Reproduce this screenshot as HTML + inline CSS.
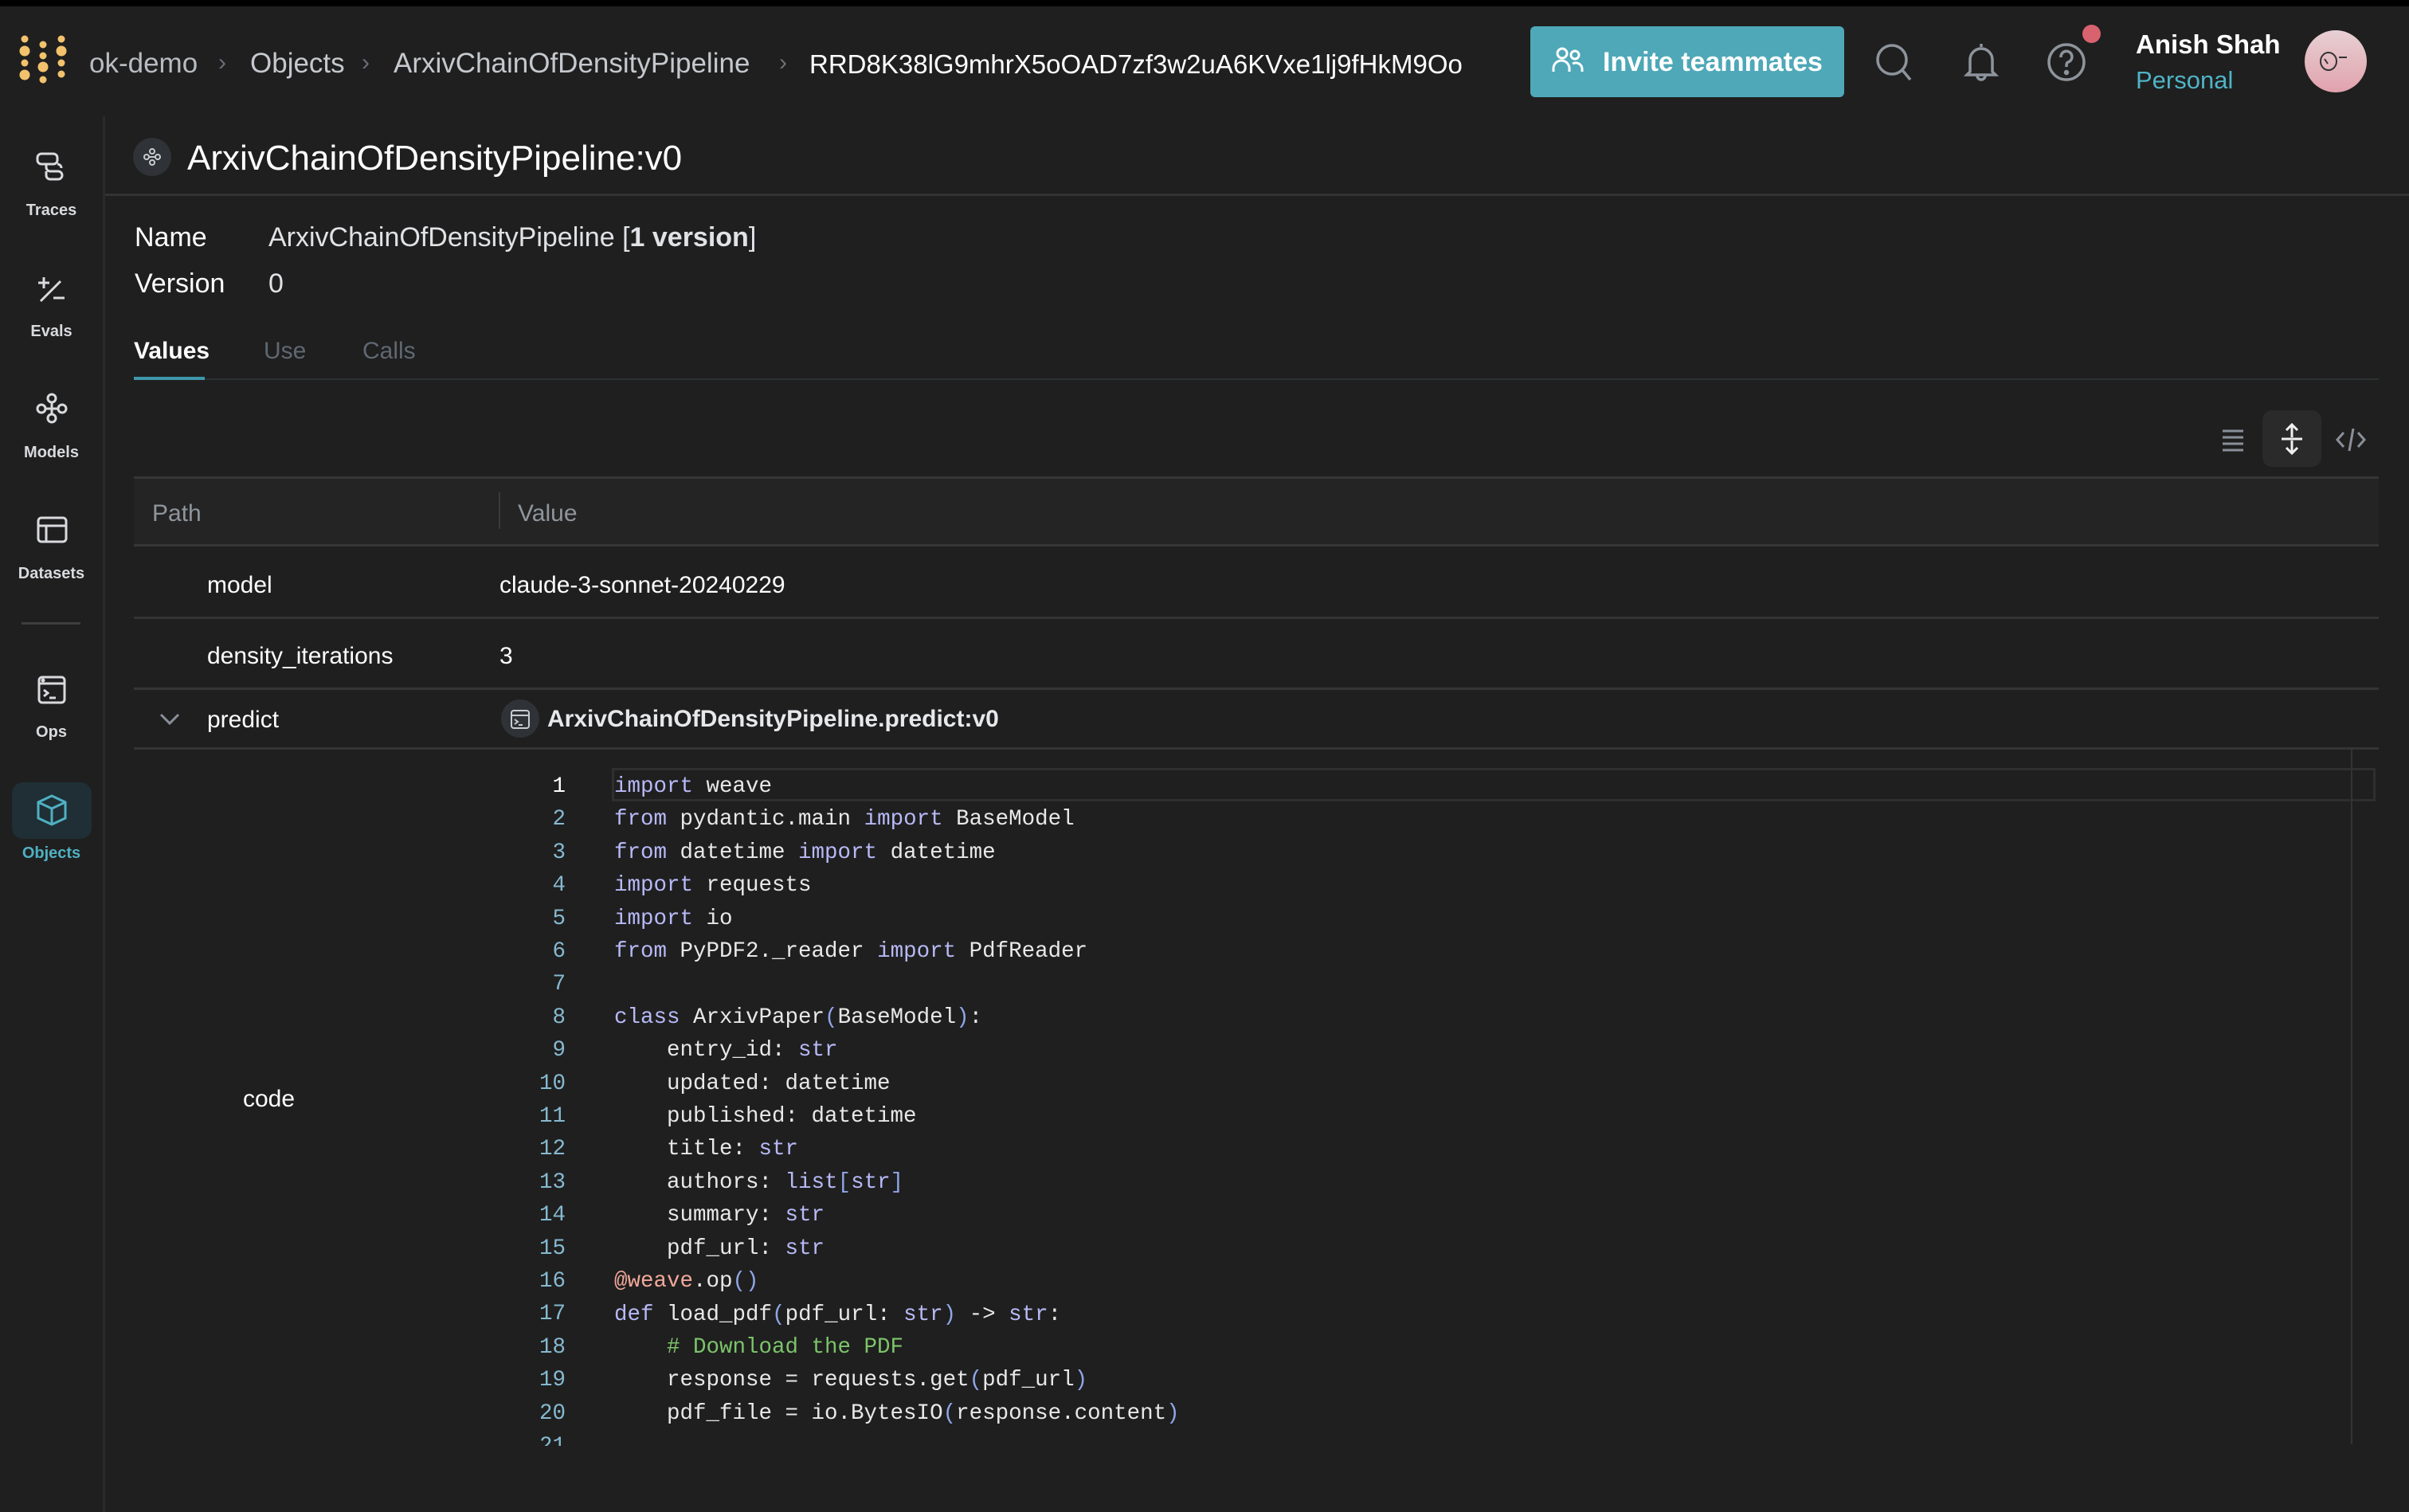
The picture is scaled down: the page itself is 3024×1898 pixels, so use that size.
<!DOCTYPE html>
<html><head><meta charset="utf-8"><style>
*{margin:0;padding:0;box-sizing:border-box}
body{width:3024px;height:1898px;background:#1f1f1f;font-family:"Liberation Sans",sans-serif;color:#e4e6eb;position:relative;overflow:hidden}
.a{position:absolute;white-space:nowrap}
.bc{font-size:35px;color:#c5c8cd;top:60px}
.chev{color:#6b7078;font-size:30px;top:62px}
.sl{font-size:20px;font-weight:bold;color:#d8dadd;width:129px;text-align:center;left:0}
.ico{position:absolute}
.row{position:absolute;left:168px;width:2818px;border-bottom:3px solid #343434}
.code{font-family:"Liberation Mono",monospace;font-size:27.5px;line-height:41.4px;color:#e8e8e8}
.ln{position:absolute;left:600px;width:110px;text-align:right;color:#86b9d0}
.k{color:#b7b9f7}.p{color:#8fa6e8}.c{color:#7cc46a}.d{color:#f0a89a}
</style></head><body>
<div class="a" style="left:0;top:0;width:3024px;height:8px;background:#000"></div>

<svg class="ico" style="left:0;top:0" width="110" height="120"><g fill="#f2c26c">
<circle cx="31" cy="49" r="4.5"/><circle cx="31" cy="64" r="6.5"/><circle cx="31" cy="79" r="4.5"/><circle cx="31" cy="94" r="6.5"/>
<circle cx="54" cy="56" r="4.5"/><circle cx="54" cy="70" r="4.5"/><circle cx="54" cy="84" r="6.5"/><circle cx="54" cy="100" r="4.5"/>
<circle cx="77" cy="49" r="4.5"/><circle cx="77" cy="64" r="6.5"/><circle cx="77" cy="79" r="4.5"/><circle cx="77" cy="93" r="4.5"/></g></svg>

<div class="a bc" style="left:112px;color:#b8bbc0">ok-demo</div>
<div class="a chev" style="left:274px">›</div>
<div class="a bc" style="left:314px">Objects</div>
<div class="a chev" style="left:454px">›</div>
<div class="a bc" style="left:494px">ArxivChainOfDensityPipeline</div>
<div class="a chev" style="left:978px">›</div>
<div class="a bc" style="left:1016px;color:#fff;font-size:33px;top:62px">RRD8K38lG9mhrX5oOAD7zf3w2uA6KVxe1lj9fHkM9Oo</div>

<div class="a" style="left:1921px;top:33px;width:394px;height:89px;background:#4ea8b8;border-radius:6px"></div>
<svg class="ico" style="left:1948px;top:58px" width="42" height="36" fill="none" stroke="#fff" stroke-width="3"><circle cx="13" cy="9" r="6"/><path d="M2 32v-4a10 10 0 0 1 20 0v4"/><circle cx="29" cy="11" r="5"/><path d="M26 22a8 8 0 0 1 12 6v4"/></svg>
<div class="a" style="left:2012px;top:59px;font-size:34px;color:#fff;font-weight:bold">Invite teammates</div>

<svg class="ico" style="left:2352px;top:52px" width="52" height="52" fill="none" stroke="#8e949c" stroke-width="3.5"><circle cx="23" cy="23" r="18"/><path d="M36 36l10 12"/></svg>
<svg class="ico" style="left:2464px;top:52px" width="46" height="52" fill="none" stroke="#8e949c" stroke-width="3.5"><path d="M23 3v4M9 38V23a14 14 0 0 1 28 0v15l4 4H5z"/><path d="M18 43a5 5 0 0 0 10 0"/></svg>
<svg class="ico" style="left:2568px;top:52px" width="52" height="52" fill="none" stroke="#8e949c" stroke-width="3.5"><circle cx="26" cy="26" r="22"/><path d="M19 20a7 7 0 1 1 9 6c-2 1-2 3-2 6"/><circle cx="26" cy="39" r="1.5" fill="#8e949c"/></svg>
<div class="a" style="left:2614px;top:31px;width:23px;height:23px;border-radius:50%;background:#d9626f"></div>
<div class="a" style="left:2681px;top:37px;font-size:33px;color:#fff;font-weight:bold">Anish Shah</div>
<div class="a" style="left:2681px;top:83px;font-size:31px;color:#4fb4c6">Personal</div>
<div class="a" style="left:2893px;top:38px;width:78px;height:78px;border-radius:50%;background:linear-gradient(#e7d0d3,#e1a2ad)"></div>
<svg class="ico" style="left:2908px;top:62px" width="44" height="30" fill="none" stroke="#333" stroke-width="2"><ellipse cx="15" cy="15" rx="10" ry="11"/><path d="M10 12l4 6M28 10h10"/></svg>

<div class="a" style="left:129px;top:146px;width:3px;height:1752px;background:#2b2b2b"></div>
<svg class="ico" style="left:44px;top:190px" width="42" height="40" fill="none" stroke="#d8dadd" stroke-width="3"><rect x="3" y="3" width="25" height="13" rx="5"/><path d="M14 16v4a5 5 0 0 0 5 5h10a5 5 0 0 1 0 10H19a5 5 0 0 1-5-5v-5M28 16a5 5 0 0 1 5 5"/></svg>
<div class="a sl" style="top:253px">Traces</div>
<svg class="ico" style="left:46px;top:345px" width="40" height="36" fill="none" stroke="#d8dadd" stroke-width="3"><path d="M2 10h14M9 3v14M5 33L30 8M21 29h14"/></svg>
<div class="a sl" style="top:405px">Evals</div>
<svg class="ico" style="left:44px;top:492px" width="42" height="42" fill="none" stroke="#d8dadd" stroke-width="3"><circle cx="21" cy="8" r="5"/><circle cx="21" cy="33" r="5"/><circle cx="8" cy="21" r="5"/><circle cx="34" cy="21" r="5"/><path d="M13 21h16M21 13v15"/></svg>
<div class="a sl" style="top:557px">Models</div>
<svg class="ico" style="left:46px;top:647px" width="40" height="36" fill="none" stroke="#d8dadd" stroke-width="3"><rect x="2" y="3" width="35" height="30" rx="4"/><path d="M2 13h35M12 13v20"/></svg>
<div class="a sl" style="top:709px">Datasets</div>
<div class="a" style="left:27px;top:781px;width:74px;height:3px;background:#3e3e3e"></div>
<svg class="ico" style="left:47px;top:848px" width="36" height="36" fill="none" stroke="#d8dadd" stroke-width="3"><rect x="2" y="2" width="32" height="32" rx="4"/><path d="M2 10h32M8 18l5 4-5 4M15 28h8"/><circle cx="7" cy="6" r="1" fill="#d8dadd"/></svg>
<div class="a sl" style="top:908px">Ops</div>
<div class="a" style="left:15px;top:982px;width:100px;height:71px;border-radius:14px;background:#1f2f35"></div>
<svg class="ico" style="left:45px;top:997px" width="40" height="40" fill="none" stroke="#4fb0c2" stroke-width="3"><path d="M20 2L37 10v20L20 38 3 30V10z"/><path d="M3 10l17 8 17-8M20 18v20"/></svg>
<div class="a sl" style="top:1060px;color:#4fb0c2">Objects</div>

<div class="a" style="left:167px;top:173px;width:48px;height:48px;border-radius:50%;background:#2f3236"></div>
<svg class="ico" style="left:179px;top:185px" width="24" height="24" fill="none" stroke="#c8cbd0" stroke-width="2"><circle cx="12" cy="5" r="3"/><circle cx="12" cy="19" r="3"/><circle cx="5" cy="12" r="3"/><circle cx="19" cy="12" r="3"/><path d="M8 12h8"/></svg>
<div class="a" style="left:235px;top:174px;font-size:44px;color:#fff">ArxivChainOfDensityPipeline:v0</div>
<div class="a" style="left:132px;top:243px;width:2892px;height:3px;background:#333"></div>

<div class="a" style="left:169px;top:279px;font-size:34px;color:#fff">Name</div>
<div class="a" style="left:337px;top:279px;font-size:34px;color:#e0e2e5">ArxivChainOfDensityPipeline [<b>1 version</b>]</div>
<div class="a" style="left:169px;top:337px;font-size:34px;color:#fff">Version</div>
<div class="a" style="left:337px;top:337px;font-size:34px;color:#e0e2e5">0</div>

<div class="a" style="left:168px;top:424px;font-size:30px;color:#fff;font-weight:bold">Values</div>
<div class="a" style="left:331px;top:424px;font-size:30px;color:#5f6872">Use</div>
<div class="a" style="left:455px;top:424px;font-size:30px;color:#5f6872">Calls</div>
<div class="a" style="left:168px;top:475px;width:2818px;height:2px;background:#2c3134"></div>
<div class="a" style="left:168px;top:473px;width:89px;height:4px;background:#3e98ab"></div>

<svg class="ico" style="left:2788px;top:537px" width="30" height="30" stroke="#8a9099" stroke-width="3"><path d="M2 4h26M2 12h26M2 20h26M2 28h26"/></svg>
<div class="a" style="left:2840px;top:515px;width:74px;height:71px;border-radius:12px;background:#2a2a2a"></div>
<svg class="ico" style="left:2862px;top:530px" width="30" height="42" fill="none" stroke="#f0f0f0" stroke-width="3"><path d="M15 3v16M8 10l7-7 7 7M2 21h26M15 23v16M8 32l7 7 7-7"/></svg>
<svg class="ico" style="left:2932px;top:536px" width="38" height="32" fill="none" stroke="#8a9099" stroke-width="3"><path d="M10 7L2 16l8 9M28 7l8 9-8 9M22 2l-5 28"/></svg>

<div class="a" style="left:168px;top:598px;width:2818px;height:88px;background:#242424;border-top:3px solid #363636;border-bottom:3px solid #363636"></div>
<div class="a" style="left:191px;top:628px;font-size:30px;color:#8f959d">Path</div>
<div class="a" style="left:626px;top:618px;width:2px;height:46px;background:#3a3a3a"></div>
<div class="a" style="left:650px;top:628px;font-size:30px;color:#8f959d">Value</div>

<div class="row" style="top:686px;height:91px"></div>
<div class="a" style="left:260px;top:718px;font-size:30px;color:#fff">model</div>
<div class="a" style="left:627px;top:718px;font-size:30px;color:#fff">claude-3-sonnet-20240229</div>
<div class="row" style="top:777px;height:89px"></div>
<div class="a" style="left:260px;top:807px;font-size:30px;color:#fff">density_iterations</div>
<div class="a" style="left:627px;top:807px;font-size:30px;color:#fff">3</div>
<div class="row" style="top:866px;height:75px"></div>
<svg class="ico" style="left:200px;top:895px" width="26" height="16" fill="none" stroke="#8a9099" stroke-width="3"><path d="M2 2l11 11 11-11"/></svg>
<div class="a" style="left:260px;top:887px;font-size:30px;color:#fff">predict</div>
<div class="a" style="left:629px;top:878px;width:48px;height:48px;border-radius:50%;background:#2f3236"></div>
<svg class="ico" style="left:640px;top:890px" width="26" height="26" fill="none" stroke="#c8cbd0" stroke-width="2"><rect x="2" y="2" width="22" height="22" rx="3"/><path d="M2 8h22M6 13l4 3-4 3M11 20h5"/></svg>
<div class="a" style="left:687px;top:886px;font-size:30px;color:#e6e8eb;font-weight:bold">ArxivChainOfDensityPipeline.predict:v0</div>

<div class="a" style="left:305px;top:1363px;font-size:30px;color:#fff">code</div>
<div class="a" style="left:768px;top:964px;width:2214px;height:42px;border:3px solid #2f2f2f"></div>
<div class="a" style="left:2951px;top:941px;width:2px;height:872px;background:#333"></div>

<div class="a" style="left:0;top:967px;width:2940px;height:848px;overflow:hidden">
<div class="code" style="position:absolute;left:0;top:0">
<div class="ln" style="top:0;color:#fff">1</div><div class="ln" style="top:41.4px">2</div><div class="ln" style="top:82.8px">3</div><div class="ln" style="top:124.2px">4</div><div class="ln" style="top:165.6px">5</div><div class="ln" style="top:207px">6</div><div class="ln" style="top:248.4px">7</div><div class="ln" style="top:289.8px">8</div><div class="ln" style="top:331.2px">9</div><div class="ln" style="top:372.6px">10</div><div class="ln" style="top:414px">11</div><div class="ln" style="top:455.4px">12</div><div class="ln" style="top:496.8px">13</div><div class="ln" style="top:538.2px">14</div><div class="ln" style="top:579.6px">15</div><div class="ln" style="top:621px">16</div><div class="ln" style="top:662.4px">17</div><div class="ln" style="top:703.8px">18</div><div class="ln" style="top:745.2px">19</div><div class="ln" style="top:786.6px">20</div><div class="ln" style="top:828px">21</div>
<pre class="code" style="position:absolute;left:771px;top:0;font-family:inherit"><span class="k">import</span> weave
<span class="k">from</span> pydantic.main <span class="k">import</span> BaseModel
<span class="k">from</span> datetime <span class="k">import</span> datetime
<span class="k">import</span> requests
<span class="k">import</span> io
<span class="k">from</span> PyPDF2._reader <span class="k">import</span> PdfReader

<span class="k">class</span> ArxivPaper<span class="p">(</span>BaseModel<span class="p">)</span>:
    entry_id: <span class="k">str</span>
    updated: datetime
    published: datetime
    title: <span class="k">str</span>
    authors: <span class="k">list</span><span class="p">[</span><span class="k">str</span><span class="p">]</span>
    summary: <span class="k">str</span>
    pdf_url: <span class="k">str</span>
<span class="d">@weave</span>.op<span class="p">()</span>
<span class="k">def</span> load_pdf<span class="p">(</span>pdf_url: <span class="k">str</span><span class="p">)</span> -&gt; <span class="k">str</span>:
    <span class="c"># Download the PDF</span>
    response = requests.get<span class="p">(</span>pdf_url<span class="p">)</span>
    pdf_file = io.BytesIO<span class="p">(</span>response.content<span class="p">)</span>
</pre></div></div>
</body></html>
